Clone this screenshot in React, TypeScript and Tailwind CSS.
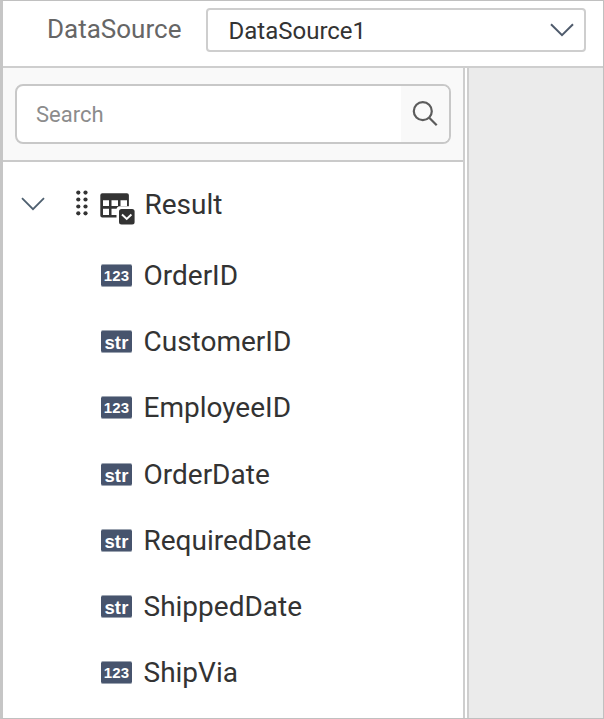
type Kind = "123" | "str";

const fields: { name: string; kind: Kind; spacing: string }[] = [
  { name: "OrderID", kind: "123", spacing: "h-[66px]" },
  { name: "CustomerID", kind: "str", spacing: "h-[66px]" },
  { name: "EmployeeID", kind: "123", spacing: "h-[66px]" },
  { name: "OrderDate", kind: "str", spacing: "mt-px h-[66px]" },
  { name: "RequiredDate", kind: "str", spacing: "h-[66px]" },
  { name: "ShippedDate", kind: "str", spacing: "h-[66px]" },
  { name: "ShipVia", kind: "123", spacing: "h-[66px]" },
];

function Chevron({ className, strokeWidth }: { className: string; strokeWidth: number }) {
  return (
    <svg className={className} viewBox="0 0 24 14" fill="none" stroke="currentColor" strokeWidth={strokeWidth}>
      <path d="M1 1.2 12 12.2 23 1.2" />
    </svg>
  );
}

function SearchIcon() {
  return (
    <svg className="h-[26px] w-[26px] text-[#5c5c5c]" viewBox="0 0 26 26" fill="none" stroke="currentColor" strokeWidth="2.2">
      <circle cx="10.8" cy="10.2" r="9" />
      <path d="m17.2 16.7 7.5 7.5" />
    </svg>
  );
}

function DragHandle() {
  return (
    <svg className="h-[26px] w-[13px] shrink-0" viewBox="0 0 13 26" fill="#333">
      {[2.6, 9.5, 16.5, 23.3].map((y) => (
        <g key={y}>
          <circle cx="3.3" cy={y} r="2.1" />
          <circle cx="10.5" cy={y} r="2.1" />
        </g>
      ))}
    </svg>
  );
}

function TableIcon() {
  return (
    <svg className="h-8 w-[35px] shrink-0" viewBox="0 0 35 32" fill="none">
      <path
        fill="#333"
        fillRule="evenodd"
        d="M2.3 .3h24.6a2 2 0 0 1 2 2v22.3H2.3a2 2 0 0 1-2-2V2.3a2 2 0 0 1 2-2ZM3 7.3V13H9V7.3ZM11.5 7.3V13H18V7.3ZM20.5 7.3V13H27V7.3ZM3 15.7V22H9V15.7ZM11.5 15.7V22H18V15.7Z"
      />
      <path fill="#fff" d="M20 13.3h15V32H16.5V16.8a3.5 3.5 0 0 1 3.5-3.5Z" />
      <rect x="19" y="16" width="15.6" height="15.6" rx="2.5" fill="#333" />
      <path d="m22 21.5 4.7 4.4 4.7-4.4" stroke="#fff" strokeWidth="2" />
    </svg>
  );
}

function TypeBadge({ kind }: { kind: Kind }) {
  return (
    <span className="mt-[21px] flex h-[23px] w-[31px] shrink-0 items-center justify-center self-start rounded-[2px] border-y border-[#9ba3b0] bg-[#47546d] font-['Liberation_Sans',sans-serif] font-bold text-white">
      <span className={kind === "123" ? "text-[15px] leading-[21px] tracking-[0.2px]" : "pt-0.5 text-[18.5px] leading-[19px] tracking-[0.2px]"}>
        {kind}
      </span>
    </span>
  );
}

export default function App() {
  return (
    <div className="flex h-[719px] w-[604px] flex-col overflow-hidden border border-l-[3px] border-[#c0c0c0] border-l-[#c6c6c6] bg-white font-['Roboto',sans-serif] text-[#333]">
      <header className="flex h-[67px] shrink-0 items-start border-b-2 border-[#cecece] pl-11 pt-[7px]">
        <span className="w-[159px] text-[26px] leading-[43px] text-[#666]">DataSource</span>
        <div className="flex h-11 w-[380px] items-center justify-between rounded-[4px] border-2 border-[#cecece] pl-[20.5px] pr-2.5">
          <span className="pt-0.5 text-[24px] leading-10">DataSource1</span>
          <Chevron className="h-[14px] w-6 text-[#4f5b6c]" strokeWidth={2} />
        </div>
      </header>
      <main className="flex min-h-0 flex-1">
        <section className="flex w-[462px] shrink-0 flex-col border-r-2 border-[#cecece]">
          <div className="flex h-[94px] shrink-0 items-start border-b-2 border-[#cacaca] bg-[#f9f9f9] pl-3 pt-4">
            <div className="flex h-[60px] w-[436px] overflow-hidden rounded-[8px] border-2 border-[#c8c8c8] bg-white">
              <span className="flex-1 pl-[19px] text-[22px] leading-[58px] text-[#8c8c8c]">Search</span>
              <span className="flex w-12 items-center justify-center bg-[#f9f9f9]">
                <SearchIcon />
              </span>
            </div>
          </div>
          <div className="flex h-[81px] shrink-0 items-start pl-[18px]">
            <Chevron className="mt-[35px] h-[14px] w-6 shrink-0 text-[#4f6070]" strokeWidth={1.8} />
            <span className="ml-[30px] mt-7"><DragHandle /></span>
            <span className="ml-3 mt-[31px]"><TableIcon /></span>
            <span className="ml-[9.5px] mt-[22px] text-[28px] leading-[42px]">Result</span>
          </div>
          <ul>
            {fields.map((field) => (
              <li key={field.name} className={`flex items-center pl-[98px] ${field.spacing}`}>
                <TypeBadge kind={field.kind} />
                <span className="ml-[11.5px] text-[28px] leading-10">{field.name}</span>
              </li>
            ))}
          </ul>
        </section>
        <div className="ml-0.5 flex-1 border-l-2 border-[#cecece] bg-[#ebebeb]" />
      </main>
    </div>
  );
}
